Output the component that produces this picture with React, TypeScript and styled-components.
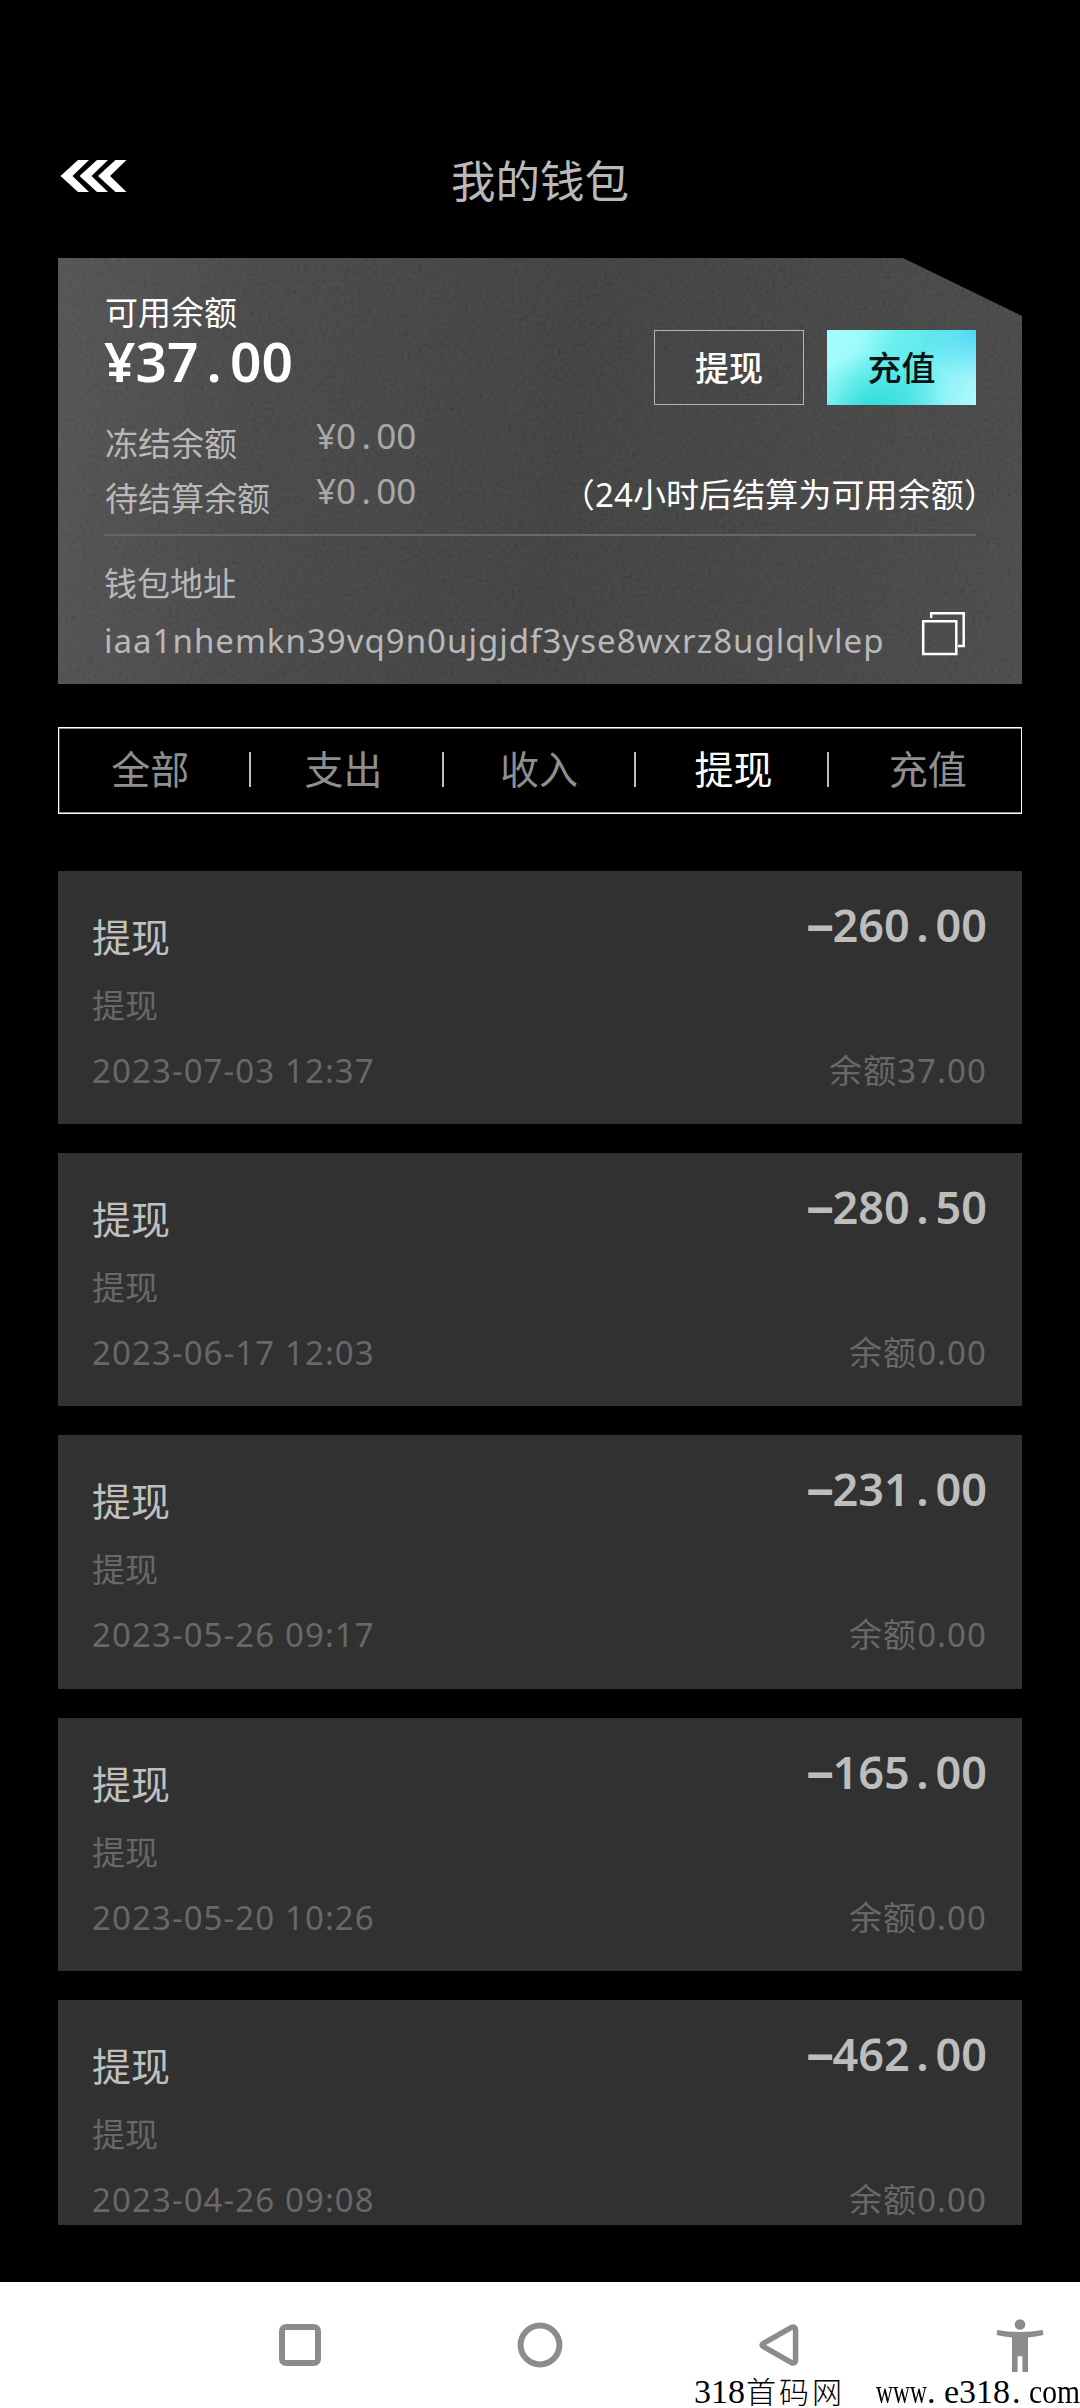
import React from "react";
import styled, { createGlobalStyle } from "styled-components";

const GlobalStyle = createGlobalStyle`
  * { box-sizing: border-box; }
  html, body { margin: 0; padding: 0; background: #000; }
  body {
    font-family: "Noto Sans", "Noto Sans CJK SC", sans-serif;
    font-size: 33px;
    color: #b9b9b9;
  }
  button { font-family: inherit; padding: 0; border-radius: 0; }
`;

const Screen = styled.div`
  width: 1080px;
  height: 2408px;
  background: #000;
  display: flex;
  flex-direction: column;
  overflow: hidden;
`;

const TopBar = styled.header`
  height: 258px;
  padding: 150px 58px 0;
  display: grid;
  grid-template-columns: 100px 1fr 100px;
  align-items: start;
`;

const BackButton = styled.button`
  border: 0;
  background: none;
  width: 70px;
  height: 32px;
  margin-top: 10px;
  display: flex;
`;

const Title = styled.h1`
  margin: 0;
  font-size: 44.5px;
  line-height: 62px;
  font-weight: 400;
  text-align: center;
  color: #b9b9b9;
`;

const WalletCard = styled.section`
  position: relative;
  isolation: isolate;
  flex: none;
  margin: 0 58px;
  height: 426px;
  padding: 35px 46px 0;
  background: linear-gradient(97deg, #515151 0%, #454545 22%, #3e3e3e 52%, #434343 82%, #484848 100%);
  clip-path: polygon(0 0, 845px 0, 100% 58px, 100% 100%, 0 100%);
`;

const Grain = styled.svg`
  position: absolute;
  inset: 0;
  z-index: -1;
  width: 100%;
  height: 100%;
  opacity: 0.06;
  pointer-events: none;
`;

const CardHead = styled.div`
  display: flex;
  justify-content: space-between;
  height: 123px;
`;

const AvailableLabel = styled.div`
  line-height: 39px;
  color: #fff;
  padding-left: 1px;
`;

const Figure = styled.span<{ $size: number; $weight?: number; $color?: string }>`
  display: block;
  font-size: ${(p) => p.$size}px;
  font-weight: ${(p) => p.$weight ?? 400};
  color: ${(p) => p.$color ?? "#b9b9b9"};
  line-height: 58px;
  white-space: nowrap;
`;

const Cell = styled.span`
  display: inline-block;
  width: 0.575em;
  text-align: center;
`;

const Minus = styled(Cell)`
  font-weight: 800;
  transform: translateY(2px) scaleX(1.08);
`;

const Actions = styled.div`
  display: flex;
  gap: 23px;
  margin-top: 37px;
`;

const ActionButton = styled.button<{ $primary?: boolean }>`
  width: ${(p) => (p.$primary ? 149 : 150)}px;
  height: 75px;
  font-size: 34px;
  line-height: 72px;
  font-weight: 500;
  border: ${(p) => (p.$primary ? "0" : "1.5px solid #b4b4b4")};
  color: ${(p) => (p.$primary ? "#0a1212" : "#fff")};
  background: ${(p) =>
    p.$primary
      ? `radial-gradient(ellipse 60px 50px at 100% 0%, #4cd9f2 0%, rgba(76,217,242,0) 100%),
         radial-gradient(ellipse 72px 60px at 32% 108%, #2fdcdc 0%, rgba(47,220,220,0) 100%),
         linear-gradient(112deg, #a6fdfd 0%, #9dfcfb 20%, #6aeeee 40%, #63ebec 58%, #8df3f8 78%, #b0f8ff 100%)`
      : "transparent"};
`;

const BalanceRow = styled.div`
  display: flex;
  align-items: center;
  height: 55px;
  padding-left: 1px;
`;

const BalanceLabel = styled.div`
  width: 211px;
  line-height: 55px;
`;

const BalanceValue = styled.div`
  margin-bottom: 16px;
`;

const Hint = styled.div`
  margin-left: auto;
  margin-right: -21px;
  margin-bottom: 12px;
  color: #fff;
  white-space: nowrap;
  letter-spacing: 0.1px;
`;

const Rule = styled.div`
  height: 2px;
  margin-top: 8px;
  background: #676767;
`;

const AddressLabel = styled.div`
  margin-top: 28px;
  line-height: 40px;
`;

const AddressRow = styled.div`
  display: flex;
  justify-content: space-between;
  align-items: flex-start;
  margin-top: 8px;
  padding-right: 11px;
`;

const Address = styled.div`
  line-height: 58px;
  letter-spacing: 1.02px;
  white-space: nowrap;
`;

const Tabs = styled.nav`
  flex: none;
  display: flex;
  align-items: center;
  margin: 43px 58px 0;
  height: 87px;
  border: 1px solid #fff;
  box-shadow: inset 0 1px 0 #8c8c8c, inset 0 -1px 0 #8c8c8c, inset 1px 0 0 #444;
`;

const Tab = styled.div<{ $active?: boolean }>`
  flex: 1;
  height: 100%;
  display: flex;
  align-items: center;
  font-size: 39px;
  color: ${(p) => (p.$active ? "#fff" : "#8f8f8f")};
`;

const TabLabel = styled.span<{ $shift: number }>`
  flex: 1;
  line-height: 81px;
  margin-bottom: 4px;
  text-align: center;
  padding-left: ${(p) => p.$shift * 2}px;
`;

const TabDivider = styled.i`
  width: 2px;
  height: 35px;
  margin-left: 8px;
  margin-bottom: 2px;
  background: #bdbdbd;
`;

const List = styled.main`
  flex: none;
  margin: 57px 58px 0;
  height: 1354px;
  overflow: hidden;
  display: flex;
  flex-direction: column;
  gap: 29px;
`;

const Record = styled.article`
  flex: none;
  height: 253.2px;
  background: #313131;
  padding: 25px 35px 0 34px;
  display: flex;
  justify-content: space-between;
`;

const RecordSide = styled.div<{ $end?: boolean }>`
  display: flex;
  flex-direction: column;
  align-items: ${(p) => (p.$end ? "flex-end" : "flex-start")};
`;

const RecordTitle = styled.div`
  font-size: 39px;
  line-height: 56px;
  margin-top: 13px;
  color: #c0c0c0;
`;

const RecordKind = styled.div`
  line-height: 50px;
  margin-top: 16px;
  color: #686868;
`;

const RecordMeta = styled.div<{ $top: number }>`
  line-height: 50px;
  margin-top: ${(p) => p.$top}px;
  color: #686868;
  letter-spacing: 1.1px;
  white-space: nowrap;
`;

const NavBar = styled.footer`
  position: relative;
  margin-top: auto;
  flex: none;
  height: 126px;
  background: #fff;
  display: grid;
  grid-template-columns: 180px 240px 240px 240px 180px;
  color: #8c8c8c;
`;

const NavSlot = styled.div<{ $shift?: number }>`
  display: flex;
  justify-content: center;
  padding-top: 33px;
  padding-left: ${(p) => p.$shift ?? 0}px;
`;

const Watermark = styled.div`
  position: absolute;
  left: 694px;
  bottom: -7px;
  width: 386px;
  display: flex;
  justify-content: space-between;
  font: 34px/44px "Liberation Serif", "Noto Sans CJK SC", serif;
  color: #000;
  white-space: nowrap;
`;

const Han = styled.span`
  font-size: 30px;
  font-weight: 300;
  letter-spacing: 3px;
  margin-left: 1px;
`;

const Site = styled.span`
  display: flex;
`;

const Squeeze = styled.span<{ $width: number; $scale: number }>`
  display: inline-block;
  width: ${(p) => p.$width}px;
  transform: scaleX(${(p) => p.$scale});
  transform-origin: left;
`;

function Money({ text, size, weight, color }: { text: string; size: number; weight?: number; color?: string }) {
  return (
    <Figure $size={size} $weight={weight} $color={color}>
      {text.split(/([.−])/).filter(Boolean).map((part, i) =>
        part === "." ? <Cell key={i}>.</Cell> : part === "−" ? <Minus key={i}>−</Minus> : part
      )}
    </Figure>
  );
}

const tabs = [
  { name: "全部", shift: 0 },
  { name: "支出", shift: 1 },
  { name: "收入", shift: 4 },
  { name: "提现", shift: 6 },
  { name: "充值", shift: 3 },
];

const records = [
  { amount: "−260.00", time: "2023-07-03 12:37", balance: "37.00" },
  { amount: "−280.50", time: "2023-06-17 12:03", balance: "0.00" },
  { amount: "−231.00", time: "2023-05-26 09:17", balance: "0.00" },
  { amount: "−165.00", time: "2023-05-20 10:26", balance: "0.00" },
  { amount: "−462.00", time: "2023-04-26 09:08", balance: "0.00" },
];

export default function App() {
  return (
    <Screen>
      <GlobalStyle />
      <TopBar>
        <BackButton aria-label="返回">
          <svg width="70" height="32" viewBox="0 0 70 32" fill="#fff">
            {[0, 19, 37.5].map((x) => (
              <path key={x} transform={`translate(${x + 2.5} 0)`} d="M17.5 0H28.5L12 16L28.5 32H17.5L0 16Z" />
            ))}
          </svg>
        </BackButton>
        <Title>我的钱包</Title>
      </TopBar>

      <WalletCard>
        <Grain aria-hidden="true">
          <filter id="grain">
            <feTurbulence type="fractalNoise" baseFrequency="0.28" numOctaves="3" seed="4" />
            <feColorMatrix values="0.9 0.9 0 0 -0.4  0.9 0.9 0 0 -0.4  0.9 0.9 0 0 -0.4  0 0 0 0 1" />
          </filter>
          <rect width="100%" height="100%" filter="url(#grain)" />
        </Grain>
        <CardHead>
          <div>
            <AvailableLabel>可用余额</AvailableLabel>
            <Money text="¥37.00" size={55} weight={600} color="#fff" />
          </div>
          <Actions>
            <ActionButton>提现</ActionButton>
            <ActionButton $primary>充值</ActionButton>
          </Actions>
        </CardHead>
        <BalanceRow>
          <BalanceLabel>冻结余额</BalanceLabel>
          <BalanceValue><Money text="¥0.00" size={35} color="#a8a8a8" /></BalanceValue>
        </BalanceRow>
        <BalanceRow>
          <BalanceLabel>待结算余额</BalanceLabel>
          <BalanceValue><Money text="¥0.00" size={35} color="#a8a8a8" /></BalanceValue>
          <Hint>（24小时后结算为可用余额）</Hint>
        </BalanceRow>
        <Rule />
        <AddressLabel>钱包地址</AddressLabel>
        <AddressRow>
          <Address>iaa1nhemkn39vq9n0ujgjdf3yse8wxrz8uglqlvlep</Address>
          <svg width="44" height="44" viewBox="0 0 44 44" fill="none" stroke="#fff" strokeWidth="2.5">
            <path d="M2.2 9.2H35.3V42H2.2Z" />
            <path d="M10.2 6V1.3H42.7V34H37" />
          </svg>
        </AddressRow>
      </WalletCard>

      <Tabs>
        {tabs.map((tab, i) => (
          <Tab key={tab.name} $active={i === 3}>
            <TabLabel $shift={tab.shift}>{tab.name}</TabLabel>
            {i < tabs.length - 1 && <TabDivider />}
          </Tab>
        ))}
      </Tabs>

      <List>
        {records.map((r) => (
          <Record key={r.time}>
            <RecordSide>
              <RecordTitle>提现</RecordTitle>
              <RecordKind>提现</RecordKind>
              <RecordMeta $top={15}>{r.time}</RecordMeta>
            </RecordSide>
            <RecordSide $end>
              <Money text={r.amount} size={45} weight={600} color="#bdbdbd" />
              <RecordMeta $top={92}>余额{r.balance}</RecordMeta>
            </RecordSide>
          </Record>
        ))}
      </List>

      <NavBar>
        <NavSlot />
        <NavSlot>
          <svg width="60" height="60" viewBox="0 0 60 60" fill="none" stroke="currentColor" strokeWidth="6">
            <rect x="12" y="12" width="36" height="36" rx="4" />
          </svg>
        </NavSlot>
        <NavSlot>
          <svg width="60" height="60" viewBox="0 0 60 60" fill="none" stroke="currentColor" strokeWidth="6">
            <circle cx="30" cy="30" r="19.4" />
          </svg>
        </NavSlot>
        <NavSlot>
          <svg width="60" height="60" viewBox="0 0 60 60" fill="none" stroke="currentColor" strokeWidth="5.5" strokeLinejoin="round">
            <path d="M13.4 28.3L41.5 12.4Q45.4 11 45.6 15V45Q45.4 49 41.5 47.6L13.4 31.7Q10.6 30 13.4 28.3Z" />
          </svg>
        </NavSlot>
        <NavSlot $shift={59}>
          <svg width="60" height="60" viewBox="0 0 60 60" fill="currentColor">
            <circle cx="30" cy="9.5" r="5.3" />
            <path d="M7.4 15Q30 19 52.6 15L53.4 20Q46 22 38 22.4V57H32.4V41.3H27.6V57H22V22.4Q14 22 6.6 20Z" />
          </svg>
        </NavSlot>
        <Watermark>
          <span>318<Han>首码网</Han></span>
          <Site>
            <Squeeze $width={51} $scale={0.69}>www</Squeeze>
            <Squeeze $width={17} $scale={1}>.</Squeeze>
            <Squeeze $width={68} $scale={1}>e318</Squeeze>
            <Squeeze $width={17} $scale={1}>.</Squeeze>
            <Squeeze $width={51} $scale={0.87}>com</Squeeze>
          </Site>
        </Watermark>
      </NavBar>
    </Screen>
  );
}
